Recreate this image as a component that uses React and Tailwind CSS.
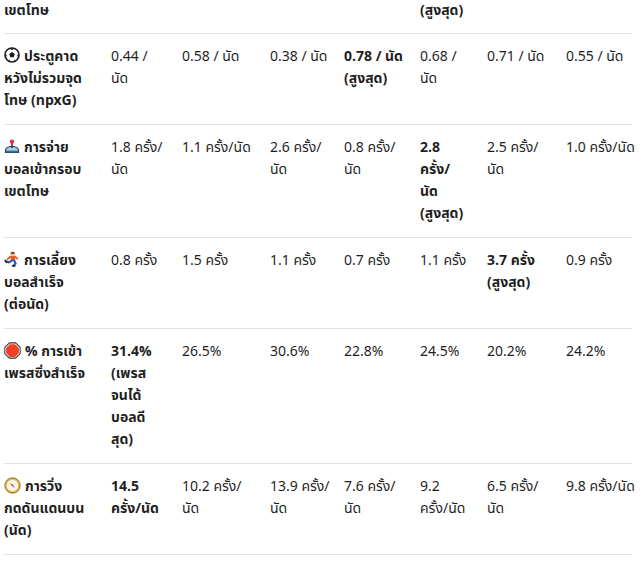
import React from 'react';

const Ball = () => (
  <svg width="16" height="16" viewBox="0 0 16 16" className="inline-block align-[-2px] mr-1">
    <circle cx="8" cy="8" r="7" fill="#fff" stroke="#1a1a1a" strokeWidth="1.6" />
    <polygon points="8,5 10.8,7 9.7,10.3 6.3,10.3 5.2,7" fill="#1a1a1a" />
    <path d="M5.6 1.6L8 3.2 10.4 1.6Z" fill="#1a1a1a" />
    <path d="M14.2 6L13.2 9.2 14.6 9.8Z" fill="#1a1a1a" />
    <path d="M1.8 6L2.8 9.2 1.4 9.8Z" fill="#1a1a1a" />
    <path d="M4 13.2L6 12.4 5.2 14.6Z" fill="#1a1a1a" />
    <path d="M12 13.2L10 12.4 10.8 14.6Z" fill="#1a1a1a" />
  </svg>
);

const Joystick = () => (
  <svg width="16" height="16" viewBox="0 0 16 16" className="inline-block align-[-2px] mr-1">
    <path d="M1.5 14.5V12.5C1.5 10 4.5 8.5 8 8.5S14.5 10 14.5 12.5V14.5Z" fill="#9fd3ef" stroke="#1d3b52" strokeWidth="1.2" />
    <rect x="1.5" y="12.6" width="13" height="1.9" fill="#3d6f93" />
    <rect x="7.2" y="4" width="1.6" height="6" fill="#7a1f1f" />
    <circle cx="8" cy="3.6" r="2.2" fill="#d8323a" />
  </svg>
);

const Runner = () => (
  <svg width="16" height="16" viewBox="0 0 16 16" className="inline-block align-[-2px] mr-1">
    <circle cx="8.6" cy="2.8" r="2.2" fill="#f2b27a" />
    <path d="M6.4 2.6C6.6 0.8 9.8 0.4 10.8 2L10.4 2.8 7.2 2.4Z" fill="#5a2e12" />
    <path d="M6.2 5.2L10.6 5 11.4 9.4 7 9.8Z" fill="#e2581e" />
    <path d="M6.4 5.6L3.6 8.2M10.6 5.4L13.4 7.6" stroke="#e2581e" strokeWidth="1.8" strokeLinecap="round" />
    <path d="M7.8 9.6L4.8 11.4 2.4 10.4M10.2 9.6l1.4 3 -1.8 2" stroke="#2d56b3" strokeWidth="2.2" strokeLinecap="round" strokeLinejoin="round" fill="none" />
    <path d="M1.2 9.4l1.2 2M8.6 14.8l2.2.2" stroke="#1a1a1a" strokeWidth="1.6" strokeLinecap="round" />
  </svg>
);

const Stop = () => (
  <svg width="17" height="17" viewBox="0 0 16 16" className="inline-block align-[-3px] mr-1">
    <polygon points="5.1,0.8 10.9,0.8 15.2,5.1 15.2,10.9 10.9,15.2 5.1,15.2 0.8,10.9 0.8,5.1" fill="#fff" stroke="#333" strokeWidth="1" />
    <polygon points="5.6,2 10.4,2 14,5.6 14,10.4 10.4,14 5.6,14 2,10.4 2,5.6" fill="#ef3f24" />
  </svg>
);

const Compass = () => (
  <svg width="17" height="17" viewBox="0 0 16 16" className="inline-block align-[-3px] mr-1">
    <circle cx="8" cy="8" r="7.2" fill="#e9b949" stroke="#7a5a17" strokeWidth="0.8" />
    <circle cx="8" cy="8" r="5.4" fill="#fbf6ea" />
    <path d="M5.6 5.6L8.6 7.4 7.4 8.6Z" fill="#d9433c" />
    <path d="M10.4 10.4L7.4 8.6 8.6 7.4Z" fill="#7d8aa0" />
  </svg>
);

const rows = [
  {
    icon: <Ball />,
    label: ['ประตูคาด', 'หวังไม่รวมจุด', 'โทษ (npxG)'],
    cells: [
      { lines: ['0.44 /', 'นัด'] },
      { lines: ['0.58 / นัด'] },
      { lines: ['0.38 / นัด'] },
      { lines: ['0.78 / นัด', '(สูงสุด)'], bold: true },
      { lines: ['0.68 /', 'นัด'] },
      { lines: ['0.71 / นัด'] },
      { lines: ['0.55 / นัด'] },
    ],
  },
  {
    icon: <Joystick />,
    label: ['การจ่าย', 'บอลเข้ากรอบ', 'เขตโทษ'],
    cells: [
      { lines: ['1.8 ครั้ง/', 'นัด'] },
      { lines: ['1.1 ครั้ง/นัด'] },
      { lines: ['2.6 ครั้ง/', 'นัด'] },
      { lines: ['0.8 ครั้ง/', 'นัด'] },
      { lines: ['2.8', 'ครั้ง/', 'นัด', '(สูงสุด)'], bold: true },
      { lines: ['2.5 ครั้ง/', 'นัด'] },
      { lines: ['1.0 ครั้ง/นัด'] },
    ],
  },
  {
    icon: <Runner />,
    label: ['การเลี้ยง', 'บอลสำเร็จ', '(ต่อนัด)'],
    cells: [
      { lines: ['0.8 ครั้ง'] },
      { lines: ['1.5 ครั้ง'] },
      { lines: ['1.1 ครั้ง'] },
      { lines: ['0.7 ครั้ง'] },
      { lines: ['1.1 ครั้ง'] },
      { lines: ['3.7 ครั้ง', '(สูงสุด)'], bold: true },
      { lines: ['0.9 ครั้ง'] },
    ],
  },
  {
    icon: <Stop />,
    label: ['% การเข้า', 'เพรสซิ่งสำเร็จ'],
    cells: [
      { lines: ['31.4%', '(เพรส', 'จนได้', 'บอลดี', 'สุด)'], bold: true },
      { lines: ['26.5%'] },
      { lines: ['30.6%'] },
      { lines: ['22.8%'] },
      { lines: ['24.5%'] },
      { lines: ['20.2%'] },
      { lines: ['24.2%'] },
    ],
  },
  {
    icon: <Compass />,
    label: ['การวิ่ง', 'กดดันแดนบน', '(นัด)'],
    cells: [
      { lines: ['14.5', 'ครั้ง/นัด'], bold: true },
      { lines: ['10.2 ครั้ง/', 'นัด'] },
      { lines: ['13.9 ครั้ง/', 'นัด'] },
      { lines: ['7.6 ครั้ง/', 'นัด'] },
      { lines: ['9.2', 'ครั้ง/นัด'] },
      { lines: ['6.5 ครั้ง/', 'นัด'] },
      { lines: ['9.8 ครั้ง/นัด'] },
    ],
  },
];

// widths measured from the shot, first column is the label
const widths = ['w-[107px]', 'w-[71px]', 'w-[88px]', 'w-[74px]', 'w-[76px]', 'w-[67px]', 'w-[79px]', 'w-[66px]'];

const Lines = ({ lines }) => lines.map((l, i) => (
  <span key={i} className="block whitespace-nowrap">{l}</span>
));

export default function App() {
  return (
    <div className="bg-white min-h-[561px] text-[#1f1f1f] text-[14px] leading-[22px]" style={{ fontFamily: '"Noto Sans Thai", "Noto Sans", Roboto, sans-serif' }}>
      <table className="ml-1 w-[628px] table-fixed border-collapse">
        <colgroup>
          {widths.map((w, i) => <col key={i} className={w} />)}
        </colgroup>
        <tbody>
          {/* tail of the row above, scrolled out of view */}
          <tr className="border-b border-[#e1e3e1] align-top">
            <td className="pb-[11px] font-bold">เขตโทษ</td>
            <td /><td /><td /><td />
            <td className="pb-[11px] font-bold">(สูงสุด)</td>
            <td /><td />
          </tr>
          {rows.map((row, r) => (
            <tr key={r} className="border-b border-[#e1e3e1] align-top">
              <td className="py-3 font-bold">
                <span className="block whitespace-nowrap">{row.icon}{row.label[0]}</span>
                {row.label.slice(1).map((l, i) => (
                  <span key={i} className="block whitespace-nowrap">{l}</span>
                ))}
              </td>
              {row.cells.map((c, i) => (
                <td key={i} className={`py-3 ${c.bold ? 'font-bold' : ''}`}>
                  <Lines lines={c.lines} />
                </td>
              ))}
            </tr>
          ))}
        </tbody>
      </table>
    </div>
  );
}
